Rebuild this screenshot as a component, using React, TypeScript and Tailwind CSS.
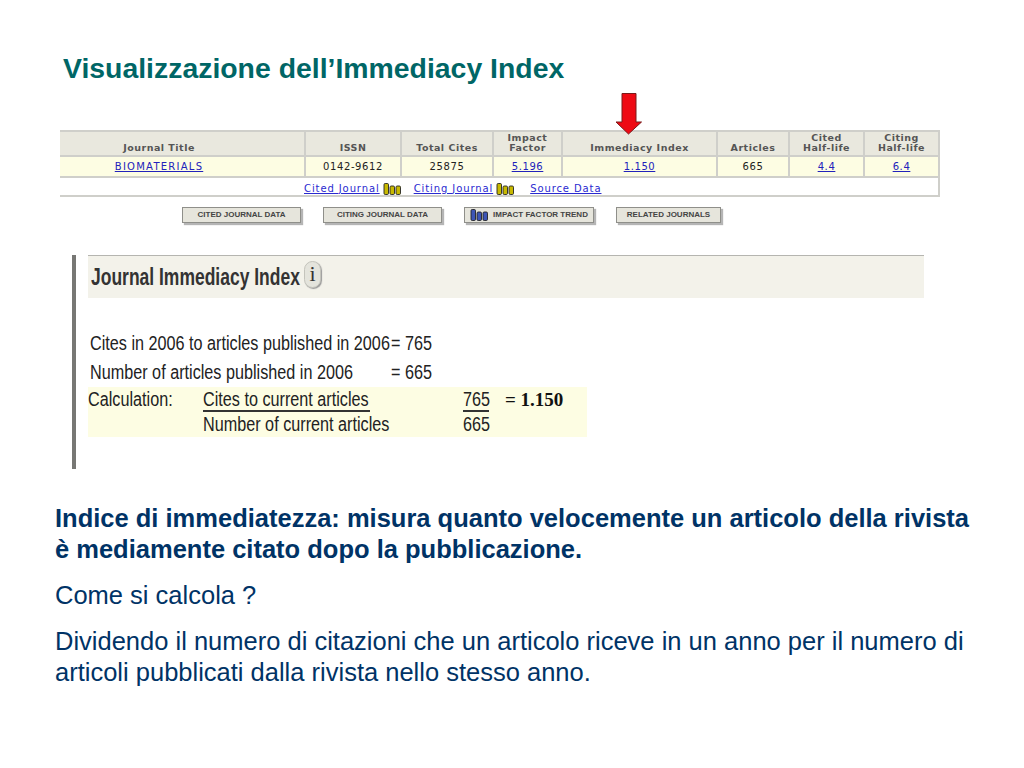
import React from 'react';

const headers = [
  { label: ['Journal Title'], width: 'w-[246px]', extra: 'pr-[46px]' },
  { label: ['ISSN'], width: 'w-[96px]', extra: '' },
  { label: ['Total Cites'], width: 'w-[92px]', extra: '' },
  { label: ['Impact', 'Factor'], width: 'w-[69px]', extra: '' },
  { label: ['Immediacy Index'], width: 'w-[155px]', extra: '' },
  { label: ['Articles'], width: 'w-[72px]', extra: '' },
  { label: ['Cited', 'Half-life'], width: 'w-[75px]', extra: '' },
  { label: ['Citing', 'Half-life'], width: 'w-[75px]', extra: '' },
];

const cells = [
  { text: 'BIOMATERIALS', link: true, extra: 'pr-[46px] tracking-[1.25px]' },
  { text: '0142-9612', link: false, extra: '' },
  { text: '25875', link: false, extra: '' },
  { text: '5.196', link: true, extra: '' },
  { text: '1.150', link: true, extra: '' },
  { text: '665', link: false, extra: '' },
  { text: '4.4', link: true, extra: '' },
  { text: '6.4', link: true, extra: '' },
];

function Bars({ color }: { color: 'yellow' | 'blue' }) {
  const fill = color === 'yellow' ? '#c8b900' : '#3d55b5';
  return (
    <svg width="18" height="12" viewBox="0 0 18 12" className="inline-block shrink-0">
      <rect x="1" y="0.5" width="4.5" height="11" rx="1.2" fill={fill} stroke="#222" strokeWidth="0.9" />
      <rect x="7" y="3" width="4.5" height="8.5" rx="1.2" fill={fill} stroke="#222" strokeWidth="0.9" />
      <rect x="13" y="3" width="4.5" height="8.5" rx="1.2" fill={fill} stroke="#222" strokeWidth="0.9" />
    </svg>
  );
}

function Button({ label, width, bars }: { label: string; width: string; bars?: boolean }) {
  return (
    <div className={`${width} h-[16px] flex items-center justify-center gap-[5px] bg-[#e6e5dc] border border-[#8f8f8a] shadow-[2px_2px_1px_#b5b5b5] text-[8px] font-bold text-[#444] whitespace-nowrap`}>
      {bars && <Bars color="blue" />}
      <span>{label}</span>
    </div>
  );
}

function Narrow({ children }: { children: React.ReactNode }) {
  return <span className="inline-block origin-left scale-x-[0.81] whitespace-nowrap">{children}</span>;
}

export default function App() {
  return (
    <div className="relative w-[1024px] h-[768px] bg-white overflow-hidden font-['Liberation_Sans',sans-serif]">
      <h1 className="pl-[63px] pt-[52px] h-[130px] text-[28.4px] leading-[32px] font-bold text-[#006666] whitespace-nowrap">
        Visualizzazione dell’Immediacy Index
      </h1>

      {/* journal table */}
      <div className="ml-[60px] w-[880px] text-[10px] tracking-[0.6px] font-['DejaVu_Sans',sans-serif] text-[#222]">
        <div className="flex h-[25px] bg-[#e9e8de] border-t-2 border-[#cfcfca]">
          {headers.map((h) => (
            <div key={h.label.join()} className={`${h.width} ${h.extra} flex flex-col justify-end items-center pb-[2px] border-r-2 border-[#cfcfca] text-[9.5px] leading-[10px] tracking-[0.5px] font-bold text-[#555]`}>
              {h.label.map((l) => (
                <span key={l}>{l}</span>
              ))}
            </div>
          ))}
        </div>
        <div className="flex h-[23px] bg-[#fdfde3] border-y-2 border-[#cfcfca]">
          {cells.map((c, i) => (
            <div key={c.text} className={`${headers[i].width} ${c.extra} flex items-center justify-center border-r-2 border-[#cfcfca] ${c.link ? 'text-[#2222bb] underline' : ''}`}>
              {c.text}
            </div>
          ))}
        </div>
        <div className="flex h-[19px] items-center pt-[3px] pl-[244px] border-b-2 border-r-2 border-[#cfcfca] text-[#2a2ad0] tracking-[0.9px]">
          <span className="underline">Cited Journal</span>
          <span className="ml-[3px]"><Bars color="yellow" /></span>
          <span className="underline ml-[13px]">Citing Journal</span>
          <span className="ml-[3px]"><Bars color="yellow" /></span>
          <span className="underline ml-[16px]">Source Data</span>
        </div>
      </div>

      <div className="flex gap-[22px] ml-[182px] mt-[10px]">
        <Button label="CITED JOURNAL DATA" width="w-[119px]" />
        <Button label="CITING JOURNAL DATA" width="w-[119px]" />
        <Button label="IMPACT FACTOR TREND" width="w-[130px]" bars />
        <Button label="RELATED JOURNALS" width="w-[105px]" />
      </div>

      {/* immediacy panel */}
      <div className="flex ml-[72px] mt-[32px] h-[214px] text-[20px] leading-[29px] text-[#222]">
        <div className="w-[4px] bg-[#777774]" />
        <div className="ml-[12px] w-[836px]">
          <div className="h-[43px] flex items-center pl-[3px] bg-[#f3f2ea] border-t border-[#b5b5b0] text-[23px] font-bold text-[#333]">
            <div className="w-[213px]">
              <span className="inline-block origin-left scale-x-[0.76] whitespace-nowrap">Journal Immediacy Index</span>
            </div>
            <span className="mb-[6px] w-[17px] h-[27px] rounded-full bg-[#e4e4dc] border border-[#c4c4bc] shadow-[1px_1px_1px_#999] flex items-center justify-center text-[22px] font-normal font-['Liberation_Serif',serif] leading-none">i</span>
          </div>
          <div className="pl-[2px] pt-[31px]">
            <div className="flex">
              <div className="w-[301px]"><Narrow>Cites in 2006 to articles published in 2006</Narrow></div>
              <Narrow>= 765</Narrow>
            </div>
            <div className="flex">
              <div className="w-[301px]"><Narrow>Number of articles published in 2006</Narrow></div>
              <Narrow>= 665</Narrow>
            </div>
          </div>
          <div className="w-[499px] h-[50px] bg-[#fdfde3] leading-[25px] flex">
            <div className="w-[115px]"><Narrow>Calculation:</Narrow></div>
            <div className="w-[260px]">
              <div className="w-[167px] border-b-2 border-[#333] h-[25px]"><Narrow>Cites to current articles</Narrow></div>
              <div><Narrow>Number of current articles</Narrow></div>
            </div>
            <div className="w-[42px]">
              <div className="w-[26px] border-b-2 border-[#333] h-[25px]"><Narrow>765</Narrow></div>
              <div><Narrow>665</Narrow></div>
            </div>
            <span className="font-['Liberation_Serif',serif] font-bold text-[19px] text-[#111] whitespace-nowrap">= 1.150</span>
          </div>
        </div>
      </div>

      <div className="pl-[55px] pt-[34px] w-[1000px] text-[25.5px] leading-[31px] text-[#003366] whitespace-nowrap">
        <p className="font-bold">
          Indice di immediatezza: misura quanto velocemente un articolo della rivista<br />
          è mediamente citato dopo la pubblicazione.
        </p>
        <p className="mt-[15px]">Come si calcola ?</p>
        <p className="mt-[15px]">
          Dividendo il numero di citazioni che un articolo riceve in un anno per il numero di<br />
          articoli pubblicati dalla rivista nello stesso anno.
        </p>
      </div>

      {/* red arrow over the table */}
      <svg className="absolute left-[615px] top-[92px]" width="28" height="44" viewBox="0 0 28 44">
        <path d="M7 1.5H21V30H26.5L13.5 42L1 30H7Z" fill="#ee0a14" stroke="#7a1a1a" strokeWidth="1" />
      </svg>
    </div>
  );
}
